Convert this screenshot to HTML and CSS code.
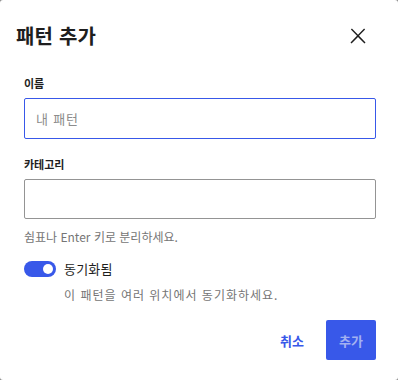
FILE: index.html
```html
<!DOCTYPE html>
<html lang="ko">
<head>
<meta charset="utf-8">
<link rel="stylesheet" href="styles.css">
</head>
<body>
<div class="modal">
  <div class="header">
    <h1 class="title">패턴 추가</h1>
    <button class="close" aria-label="닫기">
      <svg width="24" height="24" viewBox="0 0 24 24"><path d="M13 11.8l6.1-6.3-1-1-6.1 6.2-6.1-6.2-1 1 6.1 6.3-6.5 6.7 1 1 6.5-6.6 6.5 6.6 1-1z" fill="#1e1e1e"/></svg>
    </button>
  </div>
  <div class="field">
    <label class="label">이름</label>
    <div class="input focused"><span class="placeholder">내 패턴</span></div>
  </div>
  <div class="field">
    <label class="label">카테고리</label>
    <div class="input"></div>
    <p class="help">쉼표나 Enter 키로 분리하세요.</p>
  </div>
  <div class="toggle-row">
    <span class="toggle"><span class="knob"></span></span>
    <span class="toggle-label">동기화됨</span>
  </div>
  <p class="help toggle-help">이 패턴을 여러 위치에서 동기화하세요.</p>
  <div class="actions">
    <button class="btn-tertiary">취소</button>
    <button class="btn-primary">추가</button>
  </div>
</div>
</body>
</html>
```
FILE: styles.css
```css
html, body {
  margin: 0;
  padding: 0;
  background: #8a8a8a;
  width: 398px;
  height: 380px;
  overflow: hidden;
}
body {
  font-family: "Noto Sans CJK KR", "Noto Sans", sans-serif;
  color: #1e1e1e;
}
.modal {
  box-sizing: border-box;
  width: 398px;
  height: 380px;
  background: #fff;
  border-radius: 3px;
  padding: 0 22px 0 24px;
}
.header {
  display: flex;
  align-items: center;
  justify-content: space-between;
  height: 72px;
  margin-left: -8px;
  margin-right: -2px;
}
.title {
  margin: 0;
  font-size: 20px;
  font-weight: 700;
  line-height: 24px;
  color: #1e1e1e;
  letter-spacing: 0.2px;
}
.close {
  border: 0;
  background: none;
  padding: 0;
  width: 24px;
  height: 24px;
  margin-right: 8px;
  display: flex;
}
.field {
  display: flex;
  flex-direction: column;
}
.label {
  font-size: 11px;
  font-weight: 700;
  line-height: 16px;
  margin-top: 3px;
  margin-bottom: 7px;
}
.field + .field .label {
  margin-top: 17px;
  margin-bottom: 7px;
}
.input {
  box-sizing: border-box;
  height: 40px;
  border: 1px solid #949494;
  border-radius: 2px;
  display: flex;
  align-items: center;
  padding: 0 11px;
}
.input.focused {
  border: 1.5px solid #3858e9;
  height: 41px;
}
.placeholder {
  color: #8c8c8c;
  font-size: 13px;
  letter-spacing: 0.8px;
}
.help {
  margin: 10px 0 0;
  font-size: 12px;
  line-height: 16px;
  color: #757575;
}
.toggle-row {
  display: flex;
  align-items: center;
  gap: 8px;
  margin-top: 16px;
}
.toggle {
  position: relative;
  width: 32px;
  height: 16px;
  border-radius: 8px;
  background: #3858e9;
  display: block;
}
.knob {
  position: absolute;
  top: 3px;
  left: 19px;
  width: 10px;
  height: 10px;
  border-radius: 50%;
  background: #fff;
}
.toggle-label {
  font-size: 13px;
  line-height: 16px;
  letter-spacing: 0.2px;
}
.toggle-help {
  margin: 10px 0 0 40px;
  font-size: 12px;
  letter-spacing: 1px;
}
.actions {
  display: flex;
  justify-content: flex-end;
  align-items: center;
  gap: 10px;
  margin-top: 17px;
}
.btn-tertiary {
  border: 0;
  background: none;
  color: #3858e9;
  font-family: inherit;
  font-size: 13px;
  font-weight: 700;
  padding: 0 12px;
  height: 40px;
}
.btn-primary {
  border: 0;
  border-radius: 2px;
  background: #3858e9;
  color: #a3b1f0;
  font-family: inherit;
  font-size: 13px;
  font-weight: 700;
  width: 50px;
  height: 40px;
  padding: 0;
}
```
